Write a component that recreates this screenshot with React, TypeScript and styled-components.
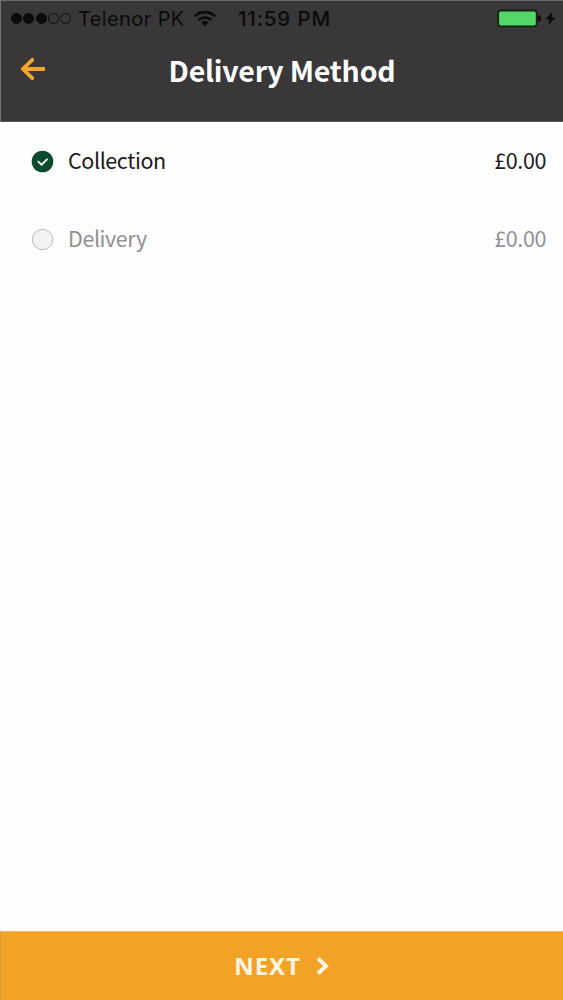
import React from "react";
import styled, { createGlobalStyle } from "styled-components";

const GlobalStyle = createGlobalStyle`
  * { box-sizing: border-box; }
  body { margin: 0; background: #fefdfe; }
`;

const Screen = styled.div`
  display: flex;
  flex-direction: column;
  height: 1000px;
  width: 563px;
  overflow: hidden;
  background: #fefdfe;
  font-family: "Noto Sans CJK JP", "Noto Sans", sans-serif;
`;

const Header = styled.header`
  height: 122px;
  flex: none;
  background: #3a3739;
  border-top: 1px solid #6d6b6d;
  border-left: 1px solid #777577;
  border-bottom: 1px solid #59575a;
`;

const StatusBar = styled.div`
  display: flex;
  align-items: center;
  height: 35px;
  padding: 0 6px 0 10px;
  font-family: Inter, sans-serif;
  font-size: 20px;
  color: #0b0a0c;
  white-space: nowrap;
`;

const Signal = styled.div`
  display: flex;
  gap: 1.3px;
  width: 67px;
`;

const Dot = styled.span<{ $filled?: boolean }>`
  width: 11px;
  height: 11px;
  border-radius: 50%;
  border: 1px solid #0b0a0c;
  background: ${(p) => (p.$filled ? "#0b0a0c" : "transparent")};
`;

const Carrier = styled.span`
  width: 116px;
  letter-spacing: 0.4px;
`;

const Clock = styled.span`
  margin-left: 22px;
  font-size: 20.5px;
  font-weight: 500;
  letter-spacing: 0.85px;
`;

const Power = styled.div`
  display: flex;
  margin-left: auto;
`;

const TitleBar = styled.div`
  display: grid;
  grid-template-columns: 60px 1fr 60px;
  align-items: center;
  height: 70px;
`;

const BackButton = styled.button`
  border: 0;
  padding: 0 0 5px 18px;
  background: none;
  display: flex;
`;

const Title = styled.h1`
  margin: 0;
  padding-bottom: 2px;
  text-align: center;
  font-size: 28.5px;
  line-height: 40px;
  font-weight: 700;
  letter-spacing: -0.2px;
  color: #fff;
  white-space: nowrap;
`;

const Options = styled.main`
  flex: 1;
  display: flex;
  flex-direction: column;
`;

const Option = styled.div<{ $selected?: boolean }>`
  display: flex;
  align-items: center;
  height: 78px;
  padding: 0 17px 0 31px;
  font-size: 21.5px;
  line-height: 30px;
  letter-spacing: -0.4px;
  color: ${(p) => (p.$selected ? "#1c1a1d" : "#929093")};
`;

const OptionLabel = styled.span`
  flex: 1;
  margin-left: 14px;
  padding-bottom: 2px;
`;

const Price = styled.span`
  padding-bottom: 2px;
`;

const NextButton = styled.button`
  height: 69px;
  flex: none;
  display: flex;
  align-items: center;
  justify-content: center;
  gap: 15px;
  border: 0;
  border-left: 1px solid #d99a35;
  border-top: 1px solid #f2b85a;
  background: #f3a228;
  color: #fff6e2;
  font-family: "Noto Sans", sans-serif;
  font-size: 24px;
  line-height: 30px;
  font-weight: 700;
  letter-spacing: 0.9px;
`;

const WifiIcon = () => (
  <svg width="22" height="17" viewBox="0 0 22 17" fill="none" stroke="#0b0a0c" strokeWidth="2.7">
    <path d="M1 6.2C6.5.8 15.5.8 21 6.2" />
    <path d="M4.6 10.1c3.6-3.5 9.2-3.5 12.8 0" />
    <path d="M7.4 12.6c2-2 5.2-2 7.2 0L11 16.2z" fill="#0b0a0c" stroke="none" />
  </svg>
);

const BatteryIcon = () => (
  <svg width="60" height="20" viewBox="0 0 60 20">
    <rect x="1.2" y="1.5" width="38.5" height="15.8" rx="2.5" fill="#53d769" stroke="#10240f" strokeWidth="1.8" />
    <path d="M41 6c4 .6 4 6.400 0 7z" fill="#0b0a0c" />
    <path d="M55.500 2.500L48.500 10.500h4l-1.500 6 7.500-8h-4z" fill="#0b0a0c" />
  </svg>
);

const BackIcon = () => (
  <svg width="28" height="24" viewBox="0 0 28 24" fill="none" stroke="#f3a52f" strokeWidth="3.800" strokeLinecap="round" strokeLinejoin="round">
    <path d="M13.300 2.800L3.800 12l9.500 9.200" />
    <path d="M5 12h21" strokeLinecap="butt" strokeWidth="4" />
  </svg>
);

const RadioIcon = ({ checked }: { checked?: boolean }) => (
  <svg width="23" height="23" viewBox="0 0 23 23" fill="none">
    {checked ? (
      <>
        <circle cx="11.500" cy="11.500" r="10.800" fill="#0b4a2d" />
        <path d="M7.300 11.700l3.300 3 5.400-5.400" stroke="#fff" strokeWidth="1.800" strokeLinecap="round" />
      </>
    ) : (
      <circle cx="11.500" cy="11.500" r="10.200" fill="#f3f2f5" stroke="#bbb9bd" />
    )}
  </svg>
);

const ChevronIcon = () => (
  <svg width="14" height="20" viewBox="0 0 14 20" fill="none" stroke="#fff6e2" strokeWidth="4">
    <path d="M2 2.500L10 10l-8 7.500" />
  </svg>
);

const options = [
  { name: "Collection", price: "£0.00", selected: true },
  { name: "Delivery", price: "£0.00", selected: false },
];

export default function App() {
  return (
    <Screen>
      <GlobalStyle />
      <Header>
        <StatusBar>
          <Signal>
            <Dot $filled />
            <Dot $filled />
            <Dot $filled />
            <Dot />
            <Dot />
          </Signal>
          <Carrier>Telenor PK</Carrier>
          <WifiIcon />
          <Clock>11:59 PM</Clock>
          <Power>
            <BatteryIcon />
          </Power>
        </StatusBar>
        <TitleBar>
          <BackButton aria-label="Back">
            <BackIcon />
          </BackButton>
          <Title>Delivery Method</Title>
        </TitleBar>
      </Header>
      <Options>
        {options.map((o) => (
          <Option key={o.name} $selected={o.selected}>
            <RadioIcon checked={o.selected} />
            <OptionLabel>{o.name}</OptionLabel>
            <Price>{o.price}</Price>
          </Option>
        ))}
      </Options>
      <NextButton>
        <span>NEXT</span>
        <ChevronIcon />
      </NextButton>
    </Screen>
  );
}
